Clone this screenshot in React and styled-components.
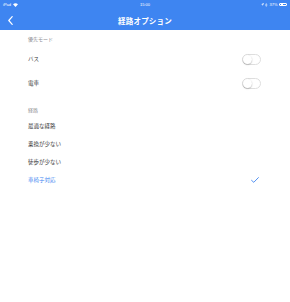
import React from 'react';
import styled, { createGlobalStyle } from 'styled-components';

const GlobalStyle = createGlobalStyle`
  html, body {
    margin: 0;
    padding: 0;
    background: #ffffff;
  }
  body {
    font-family: "Noto Sans CJK JP", "Noto Sans", sans-serif;
  }
`;

const Page = styled.div`
  width: 290px;
  height: 302px;
  background: #ffffff;
  overflow: hidden;
`;

const Header = styled.header`
  background: #3e85f1;
  height: 30px;
  display: flex;
  flex-direction: column;
`;

const StatusBar = styled.div`
  height: 9px;
  display: grid;
  grid-template-columns: 1fr auto 1fr;
  align-items: center;
  padding: 0 3px;
  color: #ffffff;
  font-family: "Liberation Sans", sans-serif;
  font-size: 4px;
  line-height: 4px;
`;

const StatusLeft = styled.div`
  display: flex;
  align-items: center;
  gap: 2px;
`;

const StatusRight = styled.div`
  display: flex;
  align-items: center;
  justify-content: flex-end;
  gap: 1.5px;
`;

const Battery = styled.div`
  width: 8px;
  height: 3.5px;
  border: 0.6px solid #ffffff;
  border-radius: 1px;
  padding: 0.5px;
  box-sizing: border-box;
  display: flex;

  &::before {
    content: '';
    width: 40%;
    background: #ffffff;
  }
`;

const NavBar = styled.div`
  flex: 1;
  display: grid;
  grid-template-columns: 40px 1fr 40px;
  align-items: center;
`;

const BackButton = styled.div`
  padding-left: 8px;
  display: flex;
  align-items: center;
  padding-top: 1px;
`;

const Title = styled.div`
  text-align: center;
  color: #ffffff;
  font-size: 7.5px;
  font-weight: 700;
  letter-spacing: 0.2px;
  padding-top: 1px;
`;

const Content = styled.div`
  padding: 0 28px;
`;

const SectionTitle = styled.div`
  color: #8e8e93;
  font-size: 5px;
  line-height: 7px;
  padding-top: ${({ $top }) => $top}px;
  padding-bottom: ${({ $bottom }) => $bottom}px;
`;

const Row = styled.div`
  height: ${({ $height }) => $height}px;
  display: flex;
  align-items: center;
  justify-content: space-between;
  font-size: 5.5px;
  color: ${({ $active }) => ($active ? '#3e85f1' : '#3a3a3a')};
`;

const Toggle = styled.div`
  width: 19px;
  height: 11px;
  border-radius: 5.5px;
  border: 0.8px solid #dedede;
  box-sizing: border-box;
  position: relative;
  margin-right: 1px;

  &::after {
    content: '';
    position: absolute;
    left: 0;
    top: 0;
    width: 9.4px;
    height: 9.4px;
    border-radius: 50%;
    background: #ffffff;
    box-shadow: 0 0.6px 1.4px rgba(0, 0, 0, 0.35);
  }
`;

const Check = styled.svg`
  width: 8px;
  height: 6px;
  margin-right: 3px;
`;

const modes = ['バス', '電車'];
const routes = ['最適な経路', '乗換が少ない', '徒歩が少ない', '車椅子対応'];
const selected = '車椅子対応';

export default function App() {
  return (
    <Page>
      <GlobalStyle />
      <Header>
        <StatusBar>
          <StatusLeft>
            <span>iPad</span>
            <svg width="5" height="4" viewBox="0 0 10 8">
              <path d="M5 8 L0 2.5 Q5 -1.5 10 2.5 Z" fill="#fff" />
            </svg>
          </StatusLeft>
          <span>15:00</span>
          <StatusRight>
            <svg width="3" height="3" viewBox="0 0 10 10">
              <path d="M10 0 L0 4.5 L5 5 L5.5 10 Z" fill="#fff" />
            </svg>
            <svg width="2.5" height="4" viewBox="0 0 6 10">
              <path d="M0.5 2.5 L5 7 L3 9 L3 1 L5 3 L0.5 7.5" fill="none" stroke="#fff" strokeWidth="1" />
            </svg>
            <span>37%</span>
            <Battery />
          </StatusRight>
        </StatusBar>
        <NavBar>
          <BackButton>
            <svg width="5" height="9" viewBox="0 0 5 9">
              <path d="M4.2 0.6 L0.8 4.5 L4.2 8.4" fill="none" stroke="#fff" strokeWidth="1.2" strokeLinecap="round" strokeLinejoin="round" />
            </svg>
          </BackButton>
          <Title>経路オプション</Title>
          <div />
        </NavBar>
      </Header>
      <Content>
        <SectionTitle $top={5} $bottom={5}>優先モード</SectionTitle>
        {modes.map((m) => (
          <Row key={m} $height={24}>
            <span>{m}</span>
            <Toggle />
          </Row>
        ))}
        <SectionTitle $top={11} $bottom={4}>経路</SectionTitle>
        {routes.map((r) => (
          <Row key={r} $height={18} $active={r === selected}>
            <span>{r}</span>
            {r === selected && (
              <Check viewBox="0 0 8 6">
                <path d="M0.6 3.4 L2.8 5.3 L7.4 0.6" fill="none" stroke="#3e85f1" strokeWidth="0.9" strokeLinecap="round" strokeLinejoin="round" />
              </Check>
            )}
          </Row>
        ))}
      </Content>
    </Page>
  );
}
